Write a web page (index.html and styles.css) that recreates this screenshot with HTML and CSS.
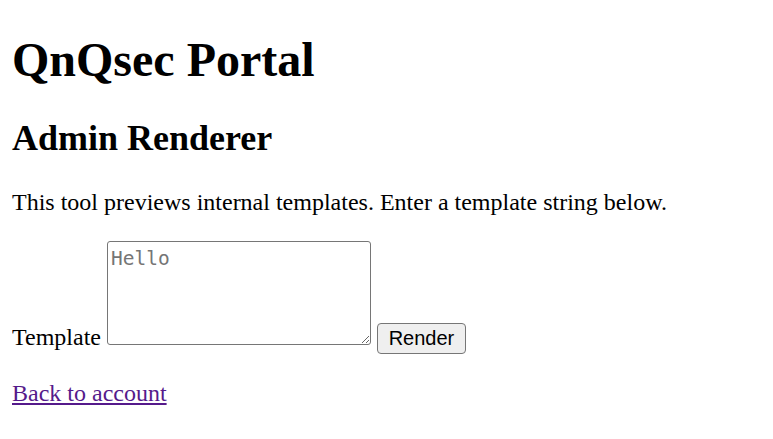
FILE: index.html
```html
<!DOCTYPE html>
<html>
<head>
<meta charset="utf-8">
<title>QnQsec Portal</title>
<link rel="stylesheet" href="styles.css">
</head>
<body>
<h1 class="title">QnQsec Portal</h1>
<h2 class="subtitle">Admin Renderer</h2>
<p class="para">This tool previews internal templates. Enter a template string below.</p>
<form class="para form">
<label class="label" for="tpl">Template</label> <textarea id="tpl" class="area" placeholder="Hello"></textarea> <button type="button" class="btn">Render</button>
</form>
<p class="para back"><a class="link" href="#">Back to account</a></p>
</body>
</html>
```
FILE: styles.css
```css
html, body {
  background: #ffffff;
}
body {
  margin: 0 12px 12px;
  padding-top: 1px;
  font-family: "Liberation Serif", "Times New Roman", serif;
  font-size: 24px;
  color: #000000;
}
.title {
  font-size: 48px;
  font-weight: bold;
  margin: 31px 0 30px;
}
.subtitle {
  font-size: 36px;
  font-weight: bold;
  margin: 30px 0;
}
.para {
  margin: 24px 0;
}
.form {
  margin-top: 25px;
}
.back {
  margin-top: 26px;
}
.area {
  box-sizing: border-box;
  width: 264px;
  height: 104px;
  margin: 0;
  padding: 5px 3px 3px;
  border: 1px solid #767676;
  border-radius: 3px;
  font-family: "DejaVu Sans Mono", "Liberation Mono", monospace;
  font-size: 19.5px;
  vertical-align: baseline;
  resize: both;
}
.area::placeholder {
  color: #757575;
}
.btn {
  box-sizing: border-box;
  width: 89px;
  height: 31px;
  margin: 0;
  padding: 2px 8px;
  font-family: "Liberation Sans", Arial, sans-serif;
  font-size: 20px;
  color: #000000;
  background: #efefef;
  border: 1px solid #767676;
  border-radius: 4px;
}
.link {
  color: #551a8b;
}
```
